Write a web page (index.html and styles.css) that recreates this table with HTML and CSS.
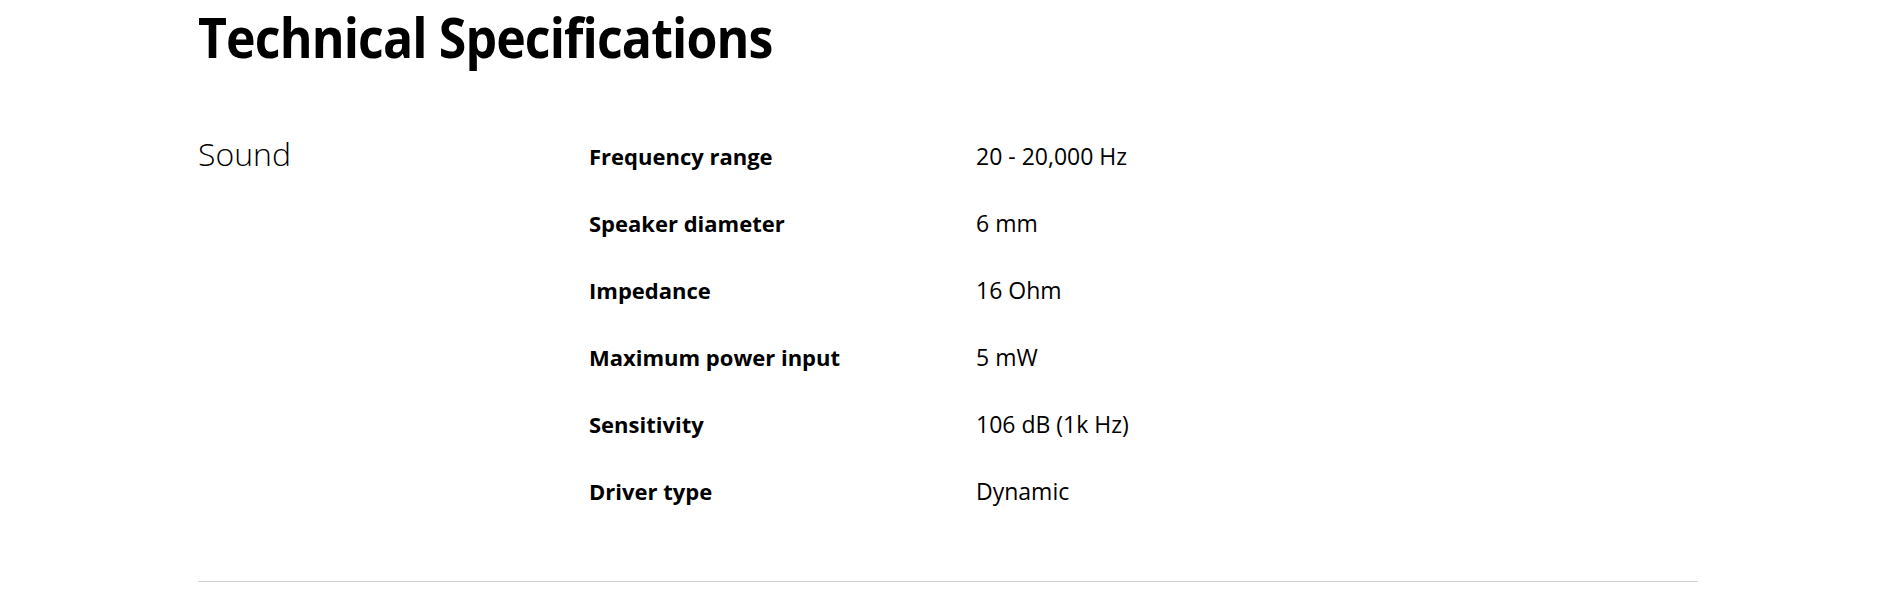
FILE: index.html
```html
<!DOCTYPE html>
<html lang="en">
<head>
<meta charset="utf-8">
<title>Technical Specifications</title>
<link rel="stylesheet" href="styles.css">
</head>
<body>
<main class="page">
  <h1 class="title">Technical Specifications</h1>
  <section class="spec-group">
    <h2 class="group-name">Sound</h2>
    <dl class="spec-list">
      <div class="spec-row"><dt class="spec-label">Frequency range</dt><dd class="spec-value">20 - 20,000 Hz</dd></div>
      <div class="spec-row"><dt class="spec-label">Speaker diameter</dt><dd class="spec-value">6 mm</dd></div>
      <div class="spec-row"><dt class="spec-label">Impedance</dt><dd class="spec-value">16 Ohm</dd></div>
      <div class="spec-row"><dt class="spec-label">Maximum power input</dt><dd class="spec-value">5 mW</dd></div>
      <div class="spec-row"><dt class="spec-label">Sensitivity</dt><dd class="spec-value">106 dB (1k Hz)</dd></div>
      <div class="spec-row"><dt class="spec-label">Driver type</dt><dd class="spec-value">Dynamic</dd></div>
    </dl>
  </section>
</main>
</body>
</html>
```

FILE: styles.css
```css
* { box-sizing: border-box; }
html, body { margin: 0; padding: 0; background: #fff; }
body {
  font-family: "Open Sans", "Noto Sans", "Liberation Sans", sans-serif;
  color: #000;
}
.page {
  width: 1500px;
  margin-left: 198px;
}
.title {
  margin: 0;
  padding-top: 3px;
  font-size: 56px;
  line-height: 67px;
  font-weight: 700;
  letter-spacing: -1px;
  transform: scaleX(0.894);
  transform-origin: left center;
}
.spec-group {
  display: grid;
  grid-template-columns: 391px 1fr;
  margin-top: 53px;
  padding-bottom: 56px;
  border-bottom: 1px solid #d2d2d2;
}
.group-name {
  margin: 11px 0 0;
  font-size: 32px;
  font-weight: 300;
  line-height: 40px;
}
.spec-list {
  margin: 0;
}
.spec-row {
  display: grid;
  grid-template-columns: 387px 1fr;
  height: 67px;
  align-items: baseline;
}
.spec-label {
  margin: 0;
  font-size: 22px;
  font-weight: 700;
  line-height: 67px;
}
.spec-value {
  margin: 0;
  font-size: 23px;
  font-weight: 400;
  line-height: 67px;
}
```
